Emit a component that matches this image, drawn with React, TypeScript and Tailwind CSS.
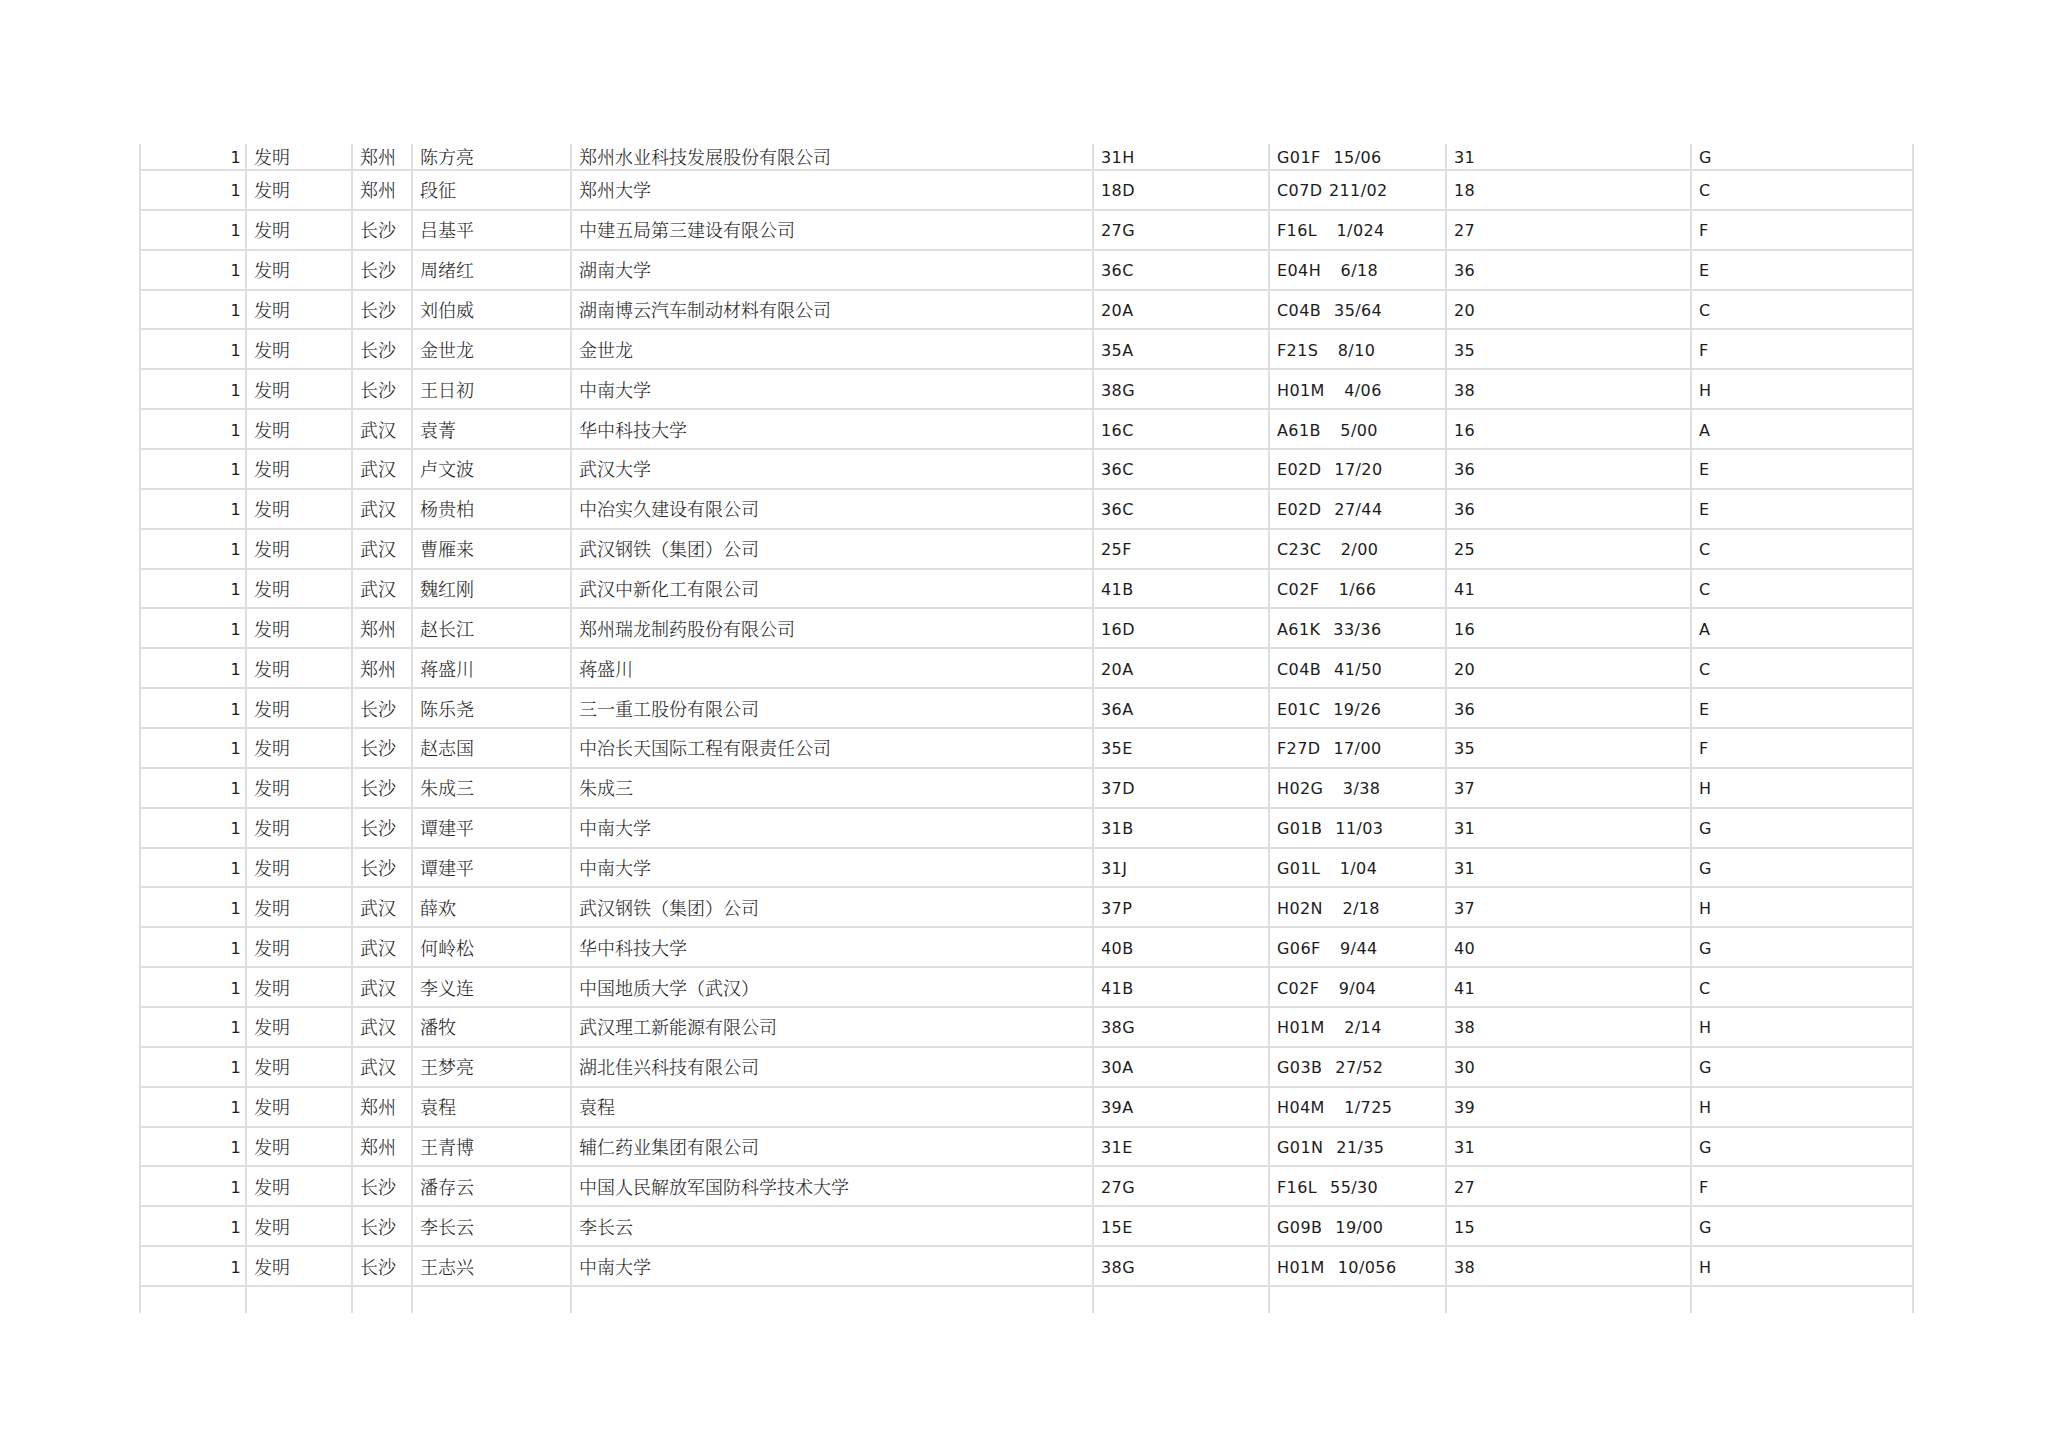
import React from "react";

// rows of the sheet: city, inventor, applicant, class, ipc, section number, section letter
const rows: [string, string, string, string, string, string, string][] = [
  ["郑州", "陈方亮", "郑州水业科技发展股份有限公司", "31H", "G01F  15/06", "31", "G"],
  ["郑州", "段征", "郑州大学", "18D", "C07D 211/02", "18", "C"],
  ["长沙", "吕基平", "中建五局第三建设有限公司", "27G", "F16L   1/024", "27", "F"],
  ["长沙", "周绪红", "湖南大学", "36C", "E04H   6/18", "36", "E"],
  ["长沙", "刘伯威", "湖南博云汽车制动材料有限公司", "20A", "C04B  35/64", "20", "C"],
  ["长沙", "金世龙", "金世龙", "35A", "F21S   8/10", "35", "F"],
  ["长沙", "王日初", "中南大学", "38G", "H01M   4/06", "38", "H"],
  ["武汉", "袁菁", "华中科技大学", "16C", "A61B   5/00", "16", "A"],
  ["武汉", "卢文波", "武汉大学", "36C", "E02D  17/20", "36", "E"],
  ["武汉", "杨贵柏", "中冶实久建设有限公司", "36C", "E02D  27/44", "36", "E"],
  ["武汉", "曹雁来", "武汉钢铁（集团）公司", "25F", "C23C   2/00", "25", "C"],
  ["武汉", "魏红刚", "武汉中新化工有限公司", "41B", "C02F   1/66", "41", "C"],
  ["郑州", "赵长江", "郑州瑞龙制药股份有限公司", "16D", "A61K  33/36", "16", "A"],
  ["郑州", "蒋盛川", "蒋盛川", "20A", "C04B  41/50", "20", "C"],
  ["长沙", "陈乐尧", "三一重工股份有限公司", "36A", "E01C  19/26", "36", "E"],
  ["长沙", "赵志国", "中冶长天国际工程有限责任公司", "35E", "F27D  17/00", "35", "F"],
  ["长沙", "朱成三", "朱成三", "37D", "H02G   3/38", "37", "H"],
  ["长沙", "谭建平", "中南大学", "31B", "G01B  11/03", "31", "G"],
  ["长沙", "谭建平", "中南大学", "31J", "G01L   1/04", "31", "G"],
  ["武汉", "薛欢", "武汉钢铁（集团）公司", "37P", "H02N   2/18", "37", "H"],
  ["武汉", "何岭松", "华中科技大学", "40B", "G06F   9/44", "40", "G"],
  ["武汉", "李义连", "中国地质大学（武汉）", "41B", "C02F   9/04", "41", "C"],
  ["武汉", "潘牧", "武汉理工新能源有限公司", "38G", "H01M   2/14", "38", "H"],
  ["武汉", "王梦亮", "湖北佳兴科技有限公司", "30A", "G03B  27/52", "30", "G"],
  ["郑州", "袁程", "袁程", "39A", "H04M   1/725", "39", "H"],
  ["郑州", "王青博", "辅仁药业集团有限公司", "31E", "G01N  21/35", "31", "G"],
  ["长沙", "潘存云", "中国人民解放军国防科学技术大学", "27G", "F16L  55/30", "27", "F"],
  ["长沙", "李长云", "李长云", "15E", "G09B  19/00", "15", "G"],
  ["长沙", "王志兴", "中南大学", "38G", "H01M  10/056", "38", "H"],
];

const grid =
  "grid grid-cols-[106px_106px_60px_159px_522px_176px_177px_245px_224px] border-[#dedede]";
const cell = "flex items-center border-l-2 border-[#dedede] pl-[7px] overflow-hidden whitespace-pre";
const cjk = "font-['Noto_Serif_CJK_SC','Noto_Sans_CJK_SC',serif] text-[18px] font-light text-[#222]";
const latin =
  "font-['Verdana','DejaVu_Sans',sans-serif] text-[16px] tracking-[0.4px] [word-spacing:1px] leading-none pt-[3px] text-[#1c1c1c]";

export default function App() {
  return (
    <div className="min-h-[1447px] w-[2048px] bg-white pt-[144px] pl-[139px]">
      <div className="w-[1775px]">
        {rows.map((r, i) => (
          <div
            key={i}
            className={`${grid} border-b-2 ${i === 0 ? "h-[27px]" : "h-[39.86px]"}`}
          >
            <div className={`${cell} ${latin} justify-end pr-[4px]`}>1</div>
            <div className={`${cell} ${cjk}`}>发明</div>
            <div className={`${cell} ${cjk}`}>{r[0]}</div>
            <div className={`${cell} ${cjk}`}>{r[1]}</div>
            <div className={`${cell} ${cjk}`}>{r[2]}</div>
            <div className={`${cell} ${latin}`}>{r[3]}</div>
            <div className={`${cell} ${latin}`}>{r[4]}</div>
            <div className={`${cell} ${latin}`}>{r[5]}</div>
            <div className={`${cell} ${latin} border-r-2`}>{r[6]}</div>
          </div>
        ))}
        {/* trailing empty row, cut off */}
        <div className={`${grid} h-[26px]`}>
          <div className={cell} />
          <div className={cell} />
          <div className={cell} />
          <div className={cell} />
          <div className={cell} />
          <div className={cell} />
          <div className={cell} />
          <div className={cell} />
          <div className={`${cell} border-r-2`} />
        </div>
      </div>
    </div>
  );
}
